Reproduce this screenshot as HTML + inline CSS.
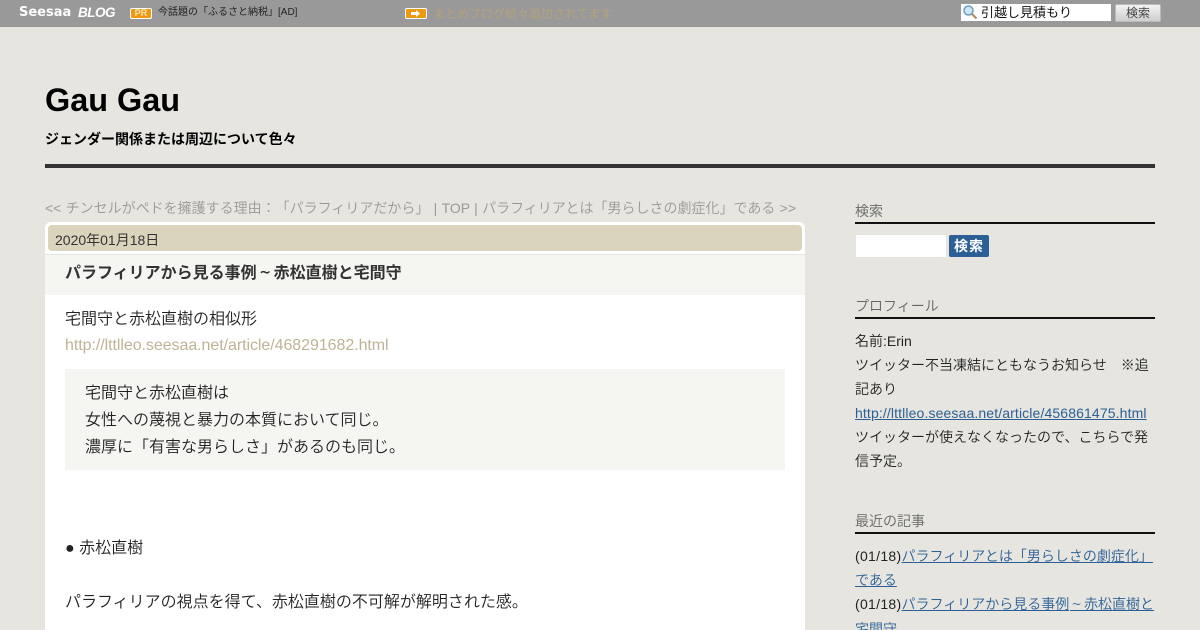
<!DOCTYPE html>
<html lang="ja"><head><meta charset="utf-8"><title>Gau Gau</title>
<style>
html,body{margin:0;padding:0;height:630px;overflow:hidden}
body{width:1200px;height:630px;overflow:hidden;position:relative;background:#e6e5e0;font-family:"Liberation Sans","Noto Sans CJK JP",sans-serif;font-weight:350;color:#222;text-spacing-trim:space-all}
.a{position:absolute;white-space:nowrap}
a{color:inherit}
.bl{color:#2b5f95;text-decoration:underline}
.t{font-family:"NanumGothic",sans-serif;letter-spacing:.06em;margin-left:.06em}
</style></head><body>
<div class="a" style="left:0;top:0;width:1200px;height:27px;background:#999"></div>
<div class="a" style="left:19px;top:5px;font:bold 13px 'DejaVu Sans',sans-serif;color:#fff">Seesaa</div>
<div class="a" style="left:78px;top:5px;font:italic bold 13.500px 'Liberation Sans',sans-serif;color:#fff;letter-spacing:-.5px">BLOG</div>
<div class="a" style="left:130px;top:8px;width:20px;height:9px;border:1px solid #fff;border-radius:2px;background:#ee9a10;color:#fff;font:9px/9px 'Liberation Sans',sans-serif;text-align:center">PR</div>
<div class="a" style="left:158px;top:6px;font-size:10px;line-height:14px;font-weight:400;color:#222">今話題の「ふるさと納税」[AD]</div>
<div class="a" style="left:405px;top:8px;width:20px;height:9px;border:1px solid #fff;border-radius:2px;background:#ee9a10"></div>
<svg class="a" style="left:410px;top:9px" width="12" height="9" viewBox="0 0 12 9"><path d="M1 3h5V1l4 3.500-4 3.500V6H1z" fill="#fff"/></svg>
<div class="a" style="left:433px;top:5px;font-size:12px;line-height:18px;font-weight:400;color:#b3a27f">まとめブログ続々追加されてます</div>
<div class="a" style="left:961px;top:4px;width:150px;height:17px;background:#fff"></div>
<svg class="a" style="left:962px;top:4px" width="16" height="16" viewBox="0 0 16 16"><circle cx="6.500" cy="6.500" r="4.500" fill="#cfe6f5" stroke="#6d9cbe" stroke-width="1.500"/><path d="M10 10l4.500 4.500" stroke="#b9885a" stroke-width="2"/></svg>
<div class="a" style="left:981px;top:4px;font-size:13px;line-height:17px;font-weight:400;color:#111">引越し見積もり</div>
<div class="a" style="left:1115px;top:4px;width:46px;height:18px;box-sizing:border-box;border:1px solid #bbb;border-radius:2px;background:linear-gradient(#f2f2f2,#cfcfcf);font-size:12px;line-height:16px;font-weight:400;text-align:center;color:#444">検索</div>

<div class="a" style="left:45px;top:80px;font:bold 32.400px/40px 'Liberation Sans',sans-serif;color:#000">Gau Gau</div>
<div class="a" style="left:45px;top:130px;font-size:14px;line-height:18px;font-weight:bold;color:#000">ジェンダー関係または周辺について色々</div>
<div class="a" style="left:45px;top:164px;width:1110px;height:4px;background:#333"></div>

<div class="a" style="left:45px;top:198px;font-size:14px;line-height:20px;color:#999;word-spacing:.4px">&lt;&lt; チンセルがペドを擁護する理由：「パラフィリアだから」 | TOP | パラフィリアとは「男らしさの劇症化」である &gt;&gt;</div>

<div class="a" style="left:45px;top:222px;width:760px;height:408px;background:#fff;border-radius:6px 6px 0 0"></div>
<div class="a" style="left:48px;top:225px;width:754px;height:26px;background:#dbd4bd;border-radius:4px"></div>
<div class="a" style="left:55px;top:231px;font-size:14px;line-height:18px;font-weight:400;color:#333">2020年01月18日</div>
<div class="a" style="left:45px;top:254px;width:760px;height:41px;box-sizing:border-box;background:#f5f5f1;border-top:1px solid #e6e6e2"></div>
<div class="a" style="left:65px;top:264px;font-size:16px;line-height:20px;font-weight:bold;color:#333">パラフィリアから見る事例<span class="t">～</span>赤松直樹と宅間守</div>

<div class="a" style="left:65px;top:306px;font-size:16px;line-height:27px">宅間守と赤松直樹の相似形</div>
<div class="a" style="left:65px;top:332px;font-size:16px;line-height:27px;color:#bfb397;letter-spacing:-.06px">http://lttlleo.seesaa.net/article/468291682.html</div>
<div class="a" style="left:65px;top:369px;width:720px;height:101px;background:#f5f5f1"></div>
<div class="a" style="left:85px;top:380px;font-size:16px;line-height:27px">宅間守と赤松直樹は<br>女性への蔑視と暴力の本質において同じ。<br>濃厚に「有害な男らしさ」があるのも同じ。</div>
<div class="a" style="left:65px;top:535px;font-size:16px;line-height:27px">● 赤松直樹</div>
<div class="a" style="left:65px;top:589px;font-size:16px;line-height:27px">パラフィリアの視点を得て、赤松直樹の不可解が解明された感。</div>

<div class="a" style="left:855px;top:201px;font-size:14px;line-height:20px;color:#666">検索</div>
<div class="a" style="left:855px;top:222px;width:300px;height:2px;background:#111"></div>
<div class="a" style="left:856px;top:235px;width:90px;height:22px;background:#fff"></div>
<div class="a" style="left:949px;top:235px;width:40px;height:22px;background:#2b5f95;border-radius:2px;color:#fff;font-size:14px;line-height:22px;font-weight:bold;text-align:center;letter-spacing:1px">検索</div>

<div class="a" style="left:855px;top:296px;font-size:14px;line-height:20px;color:#666">プロフィール</div>
<div class="a" style="left:855px;top:317px;width:300px;height:2px;background:#111"></div>
<div class="a" style="left:855px;top:329px;font-size:14px;line-height:24px">名前:Erin<br>ツイッター不当凍結にともなうお知らせ　※追<br>記あり<br><a class="bl" style="letter-spacing:.125px">http://lttlleo.seesaa.net/article/456861475.html</a><br>ツイッターが使えなくなったので、こちらで発<br>信予定。</div>

<div class="a" style="left:855px;top:511px;font-size:14px;line-height:20px;color:#666">最近の記事</div>
<div class="a" style="left:855px;top:532px;width:300px;height:2px;background:#111"></div>
<div class="a" style="left:855px;top:544px;font-size:14px;line-height:24px"><span style="letter-spacing:.3px">(01/18)</span><a class="bl">パラフィリアとは「男らしさの劇症化」</a><br><a class="bl">である</a><br><span style="letter-spacing:.3px">(01/18)</span><a class="bl">パラフィリアから見る事例<span class="t">～</span>赤松直樹と</a><br><a class="bl">宅間守</a></div>
</body></html>
